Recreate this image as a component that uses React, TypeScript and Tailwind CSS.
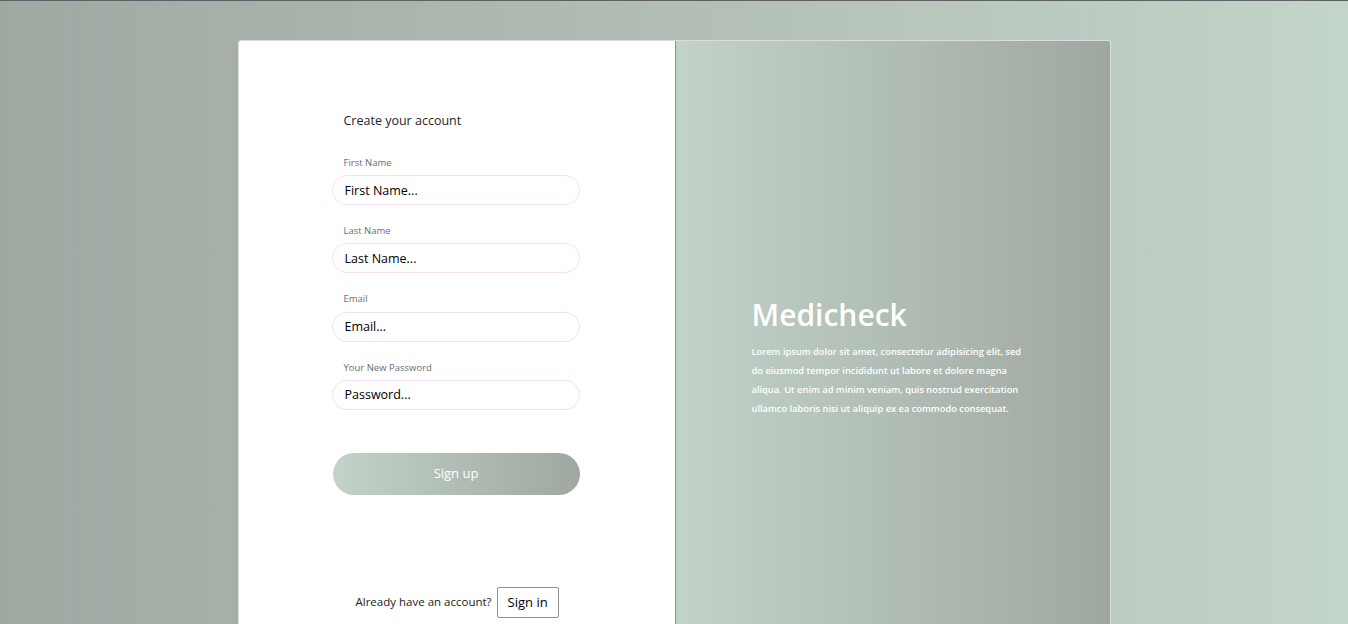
import React from 'react';

const fields = [
  { label: 'First Name', placeholder: 'First Name...', type: 'text' },
  { label: 'Last Name', placeholder: 'Last Name...', type: 'text' },
  { label: 'Email', placeholder: 'Email...', type: 'email' },
  { label: 'Your New Password', placeholder: 'Password...', type: 'password' },
];

const App: React.FC = () => {
  return (
    <div
      className="min-h-screen w-full border-t border-[#5e6066] bg-gradient-to-r from-[#a0a8a2] to-[#c3d4c9] pt-[39px]"
      style={{ fontFamily: '"Open Sans", "Noto Sans", sans-serif' }}
    >
      <div className="mx-auto flex h-[640px] w-[873px] overflow-hidden rounded-t-[3px] border border-[#dcdcdc] bg-white">
        <div className="flex w-[436px] shrink-0 flex-col pl-[93px]">
          <h2 className="mt-[71px] pl-[12px] text-[12.5px] font-medium text-[#1f2430]">Create your account</h2>

          <form className="mt-[25px] flex w-[248px] flex-col gap-[19px]">
            {fields.map((f) => (
              <div key={f.label} className="flex flex-col">
                <label className="pl-[12px] text-[9.5px] text-[#6b6e72]">{f.label}</label>
                <input
                  type={f.type}
                  placeholder={f.placeholder}
                  className="mt-[5px] h-[30px] w-full rounded-full border border-[#f3dff3] px-[12px] text-[12.5px] text-black outline-none placeholder:text-black"
                />
              </div>
            ))}
            <button
              type="button"
              className="ml-[1px] mt-[24px] h-[42px] w-[247px] rounded-full bg-gradient-to-r from-[#c2d3c8] to-[#9fa7a1] text-[13px] text-white"
            >
              Sign up
            </button>
          </form>

          <div className="mt-[90px] flex items-center gap-[5px] pl-[24px]">
            <span className="text-[11.5px] text-[#222]">Already have an account?</span>
            <button type="button" className="mt-[2px] h-[31px] rounded-[2px] border border-[#8f8f8f] px-[10px] text-[13px] text-black">
              Sign in
            </button>
          </div>
        </div>

        <div className="flex flex-1 flex-col justify-center border-l border-[#8d918e] bg-gradient-to-r from-[#c2d3c8] to-[#9fa7a1] pb-[6px] pl-[76px]">
          <h1 className="text-[30px] font-semibold leading-[36px] text-white">Medicheck</h1>
          <p className="mt-[9px] w-[275px] text-[9.3px] font-semibold leading-[19px] text-white">
            Lorem ipsum dolor sit amet, consectetur adipisicing elit, sed do eiusmod tempor incididunt ut labore et dolore magna aliqua. Ut enim ad minim veniam, quis nostrud exercitation ullamco laboris nisi ut aliquip ex ea commodo consequat.
          </p>
        </div>
      </div>
    </div>
  );
};

export default App;
